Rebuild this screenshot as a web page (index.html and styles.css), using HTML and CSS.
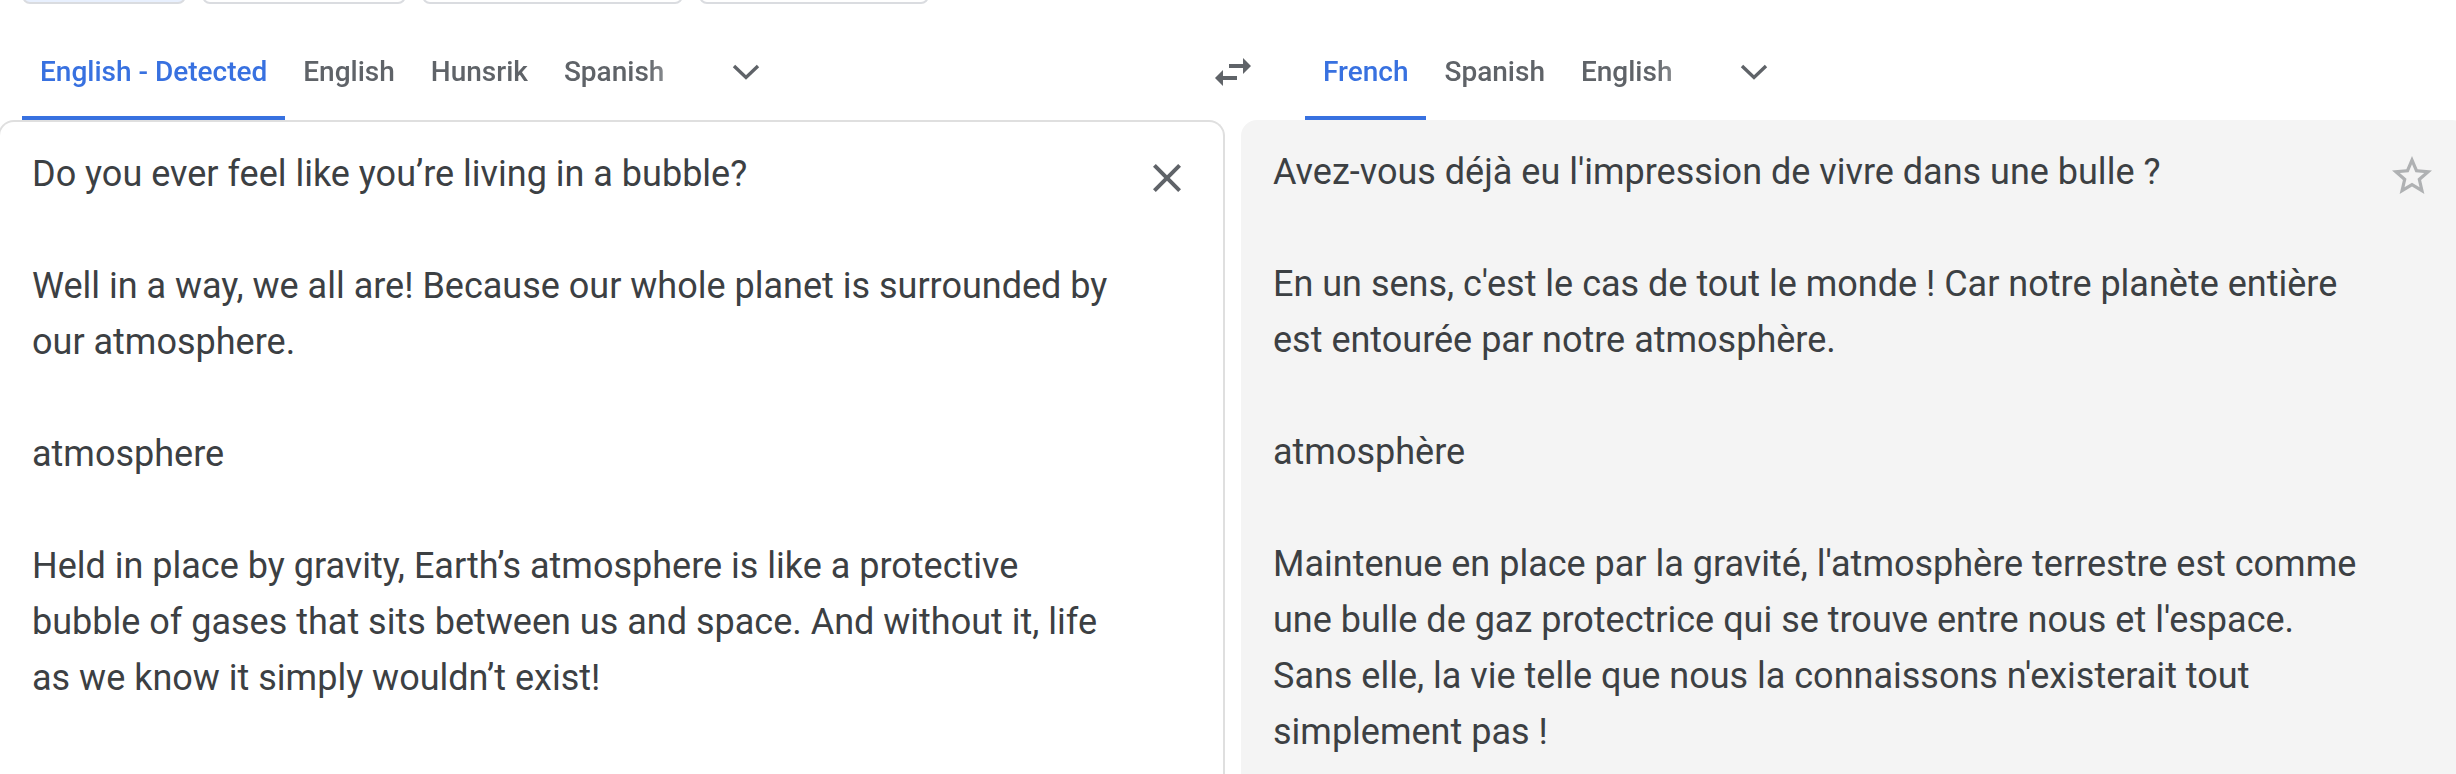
FILE: index.html
```html
<!DOCTYPE html>
<html lang="en">
<head>
    <meta charset="UTF-8">
    <meta name="viewport" content="width=device-width, initial-scale=1.0">
    <title>Translate</title>
    <link rel="stylesheet" href="styles.css">
</head>
<body>

<div class="translator">
    <nav class="modes" aria-label="Translation type">
        <button class="mode mode-text selected" aria-label="Text"></button>
        <button class="mode mode-images" aria-label="Images"></button>
        <button class="mode mode-documents" aria-label="Documents"></button>
        <button class="mode mode-websites" aria-label="Websites"></button>
    </nav>

    <div class="languages">
        <div class="language-bar">
            <div class="tabs" role="tablist" aria-label="Source language">
                <button class="tab active" role="tab" aria-selected="true">English - Detected</button>
                <button class="tab" role="tab">English</button>
                <button class="tab" role="tab">Hunsrik</button>
                <button class="tab" role="tab">Spanish</button>
            </div>
            <button class="icon-button more" aria-label="More source languages">
                <svg width="48" height="48" viewBox="0 0 48 48"><path d="M12 18l12 11.5 12-11.5" fill="none" stroke="currentColor" stroke-width="3.4"/></svg>
            </button>
        </div>
        <button class="icon-button swap" aria-label="Swap languages">
            <svg width="48" height="48" viewBox="0 0 24 24"><path d="M6.99 11L3 15l3.99 4v-3H14v-2H6.99v-3zM21 9l-3.99-4v3H10v2h7.01v3L21 9z" fill="currentColor"/></svg>
        </button>
        <div class="language-bar">
            <div class="tabs" role="tablist" aria-label="Target language">
                <button class="tab active" role="tab" aria-selected="true">French</button>
                <button class="tab" role="tab">Spanish</button>
                <button class="tab" role="tab">English</button>
            </div>
            <button class="icon-button more" aria-label="More target languages">
                <svg width="48" height="48" viewBox="0 0 48 48"><path d="M12 18l12 11.5 12-11.5" fill="none" stroke="currentColor" stroke-width="3.4"/></svg>
            </button>
        </div>
    </div>

    <div class="panels">
        <div class="panel source">
            <textarea class="text" aria-label="Source text" spellcheck="false">Do you ever feel like you’re living in a bubble?

Well in a way, we all are! Because our whole planet is surrounded by our atmosphere.

atmosphere

Held in place by gravity, Earth’s atmosphere is like a protective bubble of gases that sits between us and space. And without it, life as we know it simply wouldn’t exist!</textarea>
            <button class="icon-button side" aria-label="Clear source text">
                <svg width="48" height="48" viewBox="0 0 24 24"><path d="M19 6.41L17.59 5 12 10.59 6.41 5 5 6.41 10.59 12 5 17.59 6.41 19 12 13.41 17.59 19 19 17.59 13.41 12z" fill="currentColor"/></svg>
            </button>
        </div>
        <div class="panel target">
            <div class="text" lang="fr">
                <p>Avez-vous déjà eu l'impression de vivre dans une bulle ?</p>
                <p>En un sens, c'est le cas de tout le monde ! Car notre planète entière est entourée par notre atmosphère.</p>
                <p>atmosphère</p>
                <p>Maintenue en place par la gravité, l'atmosphère terrestre est comme une bulle de gaz protectrice qui se trouve entre nous et l'espace. Sans elle, la vie telle que nous la connaissons n'existerait tout simplement pas !</p>
            </div>
            <button class="icon-button side star" aria-label="Save translation">
                <svg width="48" height="48" viewBox="0 0 24 24"><path d="M22 9.24l-7.19-.62L12 2 9.19 8.63 2 9.24l5.46 4.73L5.82 21 12 17.27 18.18 21l-1.63-7.03L22 9.24zM12 15.4l-3.76 2.27 1-4.28-3.32-2.88 4.38-.38L12 6.1l1.71 4.04 4.38.38-3.32 2.88 1 4.28L12 15.4z" fill="currentColor"/></svg>
            </button>
        </div>
    </div>
</div>

</body>
</html>
```

FILE: styles.css
```css
* {
    box-sizing: border-box;
}
body {
    margin: 0;
    font-family: Roboto, "Liberation Sans", sans-serif;
    color: #3c4043;
    background-color: white;
    overflow: hidden;
}
button {
    font-family: inherit;
    border: none;
    background: none;
    cursor: pointer;
}
.translator {
    display: flex;
    flex-direction: column;
    min-height: 100vh;
    margin: 0 -12px 0 -2px;
}

/* only the bottom edge of the mode buttons is in view */
.modes {
    display: flex;
    align-items: flex-end;
    gap: 16px;
    height: 4px;
    padding-left: 24px;
    overflow: hidden;
}
.mode {
    flex-shrink: 0;
    height: 72px;
    border: 2px solid #dadce0;
    border-radius: 8px;
}
.mode.selected {
    background-color: #e8f0fe;
}
.mode-text {
    width: 164px;
}
.mode-images {
    width: 204px;
}
.mode-documents {
    width: 261px;
}
.mode-websites {
    width: 230px;
}

.languages {
    display: grid;
    grid-template-columns: 1fr 96px 1fr;
    padding-top: 20px;
}
.language-bar {
    display: flex;
    padding-left: 24px;
}
.tabs {
    display: flex;
    -webkit-mask-image: linear-gradient(to right, black calc(100% - 36px), rgba(0, 0, 0, 0.5));
    mask-image: linear-gradient(to right, black calc(100% - 36px), rgba(0, 0, 0, 0.5));
}
.tab {
    height: 96px;
    padding: 2px 18px 0;
    font-size: 28px;
    font-weight: 500;
    color: #5f6368;
    border-bottom: 4px solid transparent;
}
.tab.active {
    color: #3871e0;
    border-bottom-color: #3871e0;
}
.icon-button {
    display: flex;
    align-items: center;
    justify-content: center;
    padding: 0;
    color: #5f6368;
}
.more {
    width: 96px;
    margin-left: 16px;
}

.panels {
    display: grid;
    grid-template-columns: 1fr 1fr;
    gap: 16px;
    flex: 1;
}
.panel {
    display: flex;
    align-items: flex-start;
    padding-right: 8px;
    border-radius: 16px 16px 0 0;
}
.source {
    border: 2px solid #dfdfdf;
    border-bottom: none;
}
.target {
    background-color: #f4f4f4;
}
.text {
    flex: 1;
    min-width: 0;
    padding: 24px 0 24px 32px;
    font-size: 36px;
    line-height: 56px;
}
textarea.text {
    align-self: stretch;
    font-family: inherit;
    color: inherit;
    background: none;
    border: none;
    outline: none;
    resize: none;
    overflow: hidden;
}
.text p {
    margin: 0 0 56px;
}
.text p:last-child {
    margin-bottom: 0;
}
.side {
    width: 96px;
    height: 112px;
}
.star {
    color: #afb1b3;
}
```
